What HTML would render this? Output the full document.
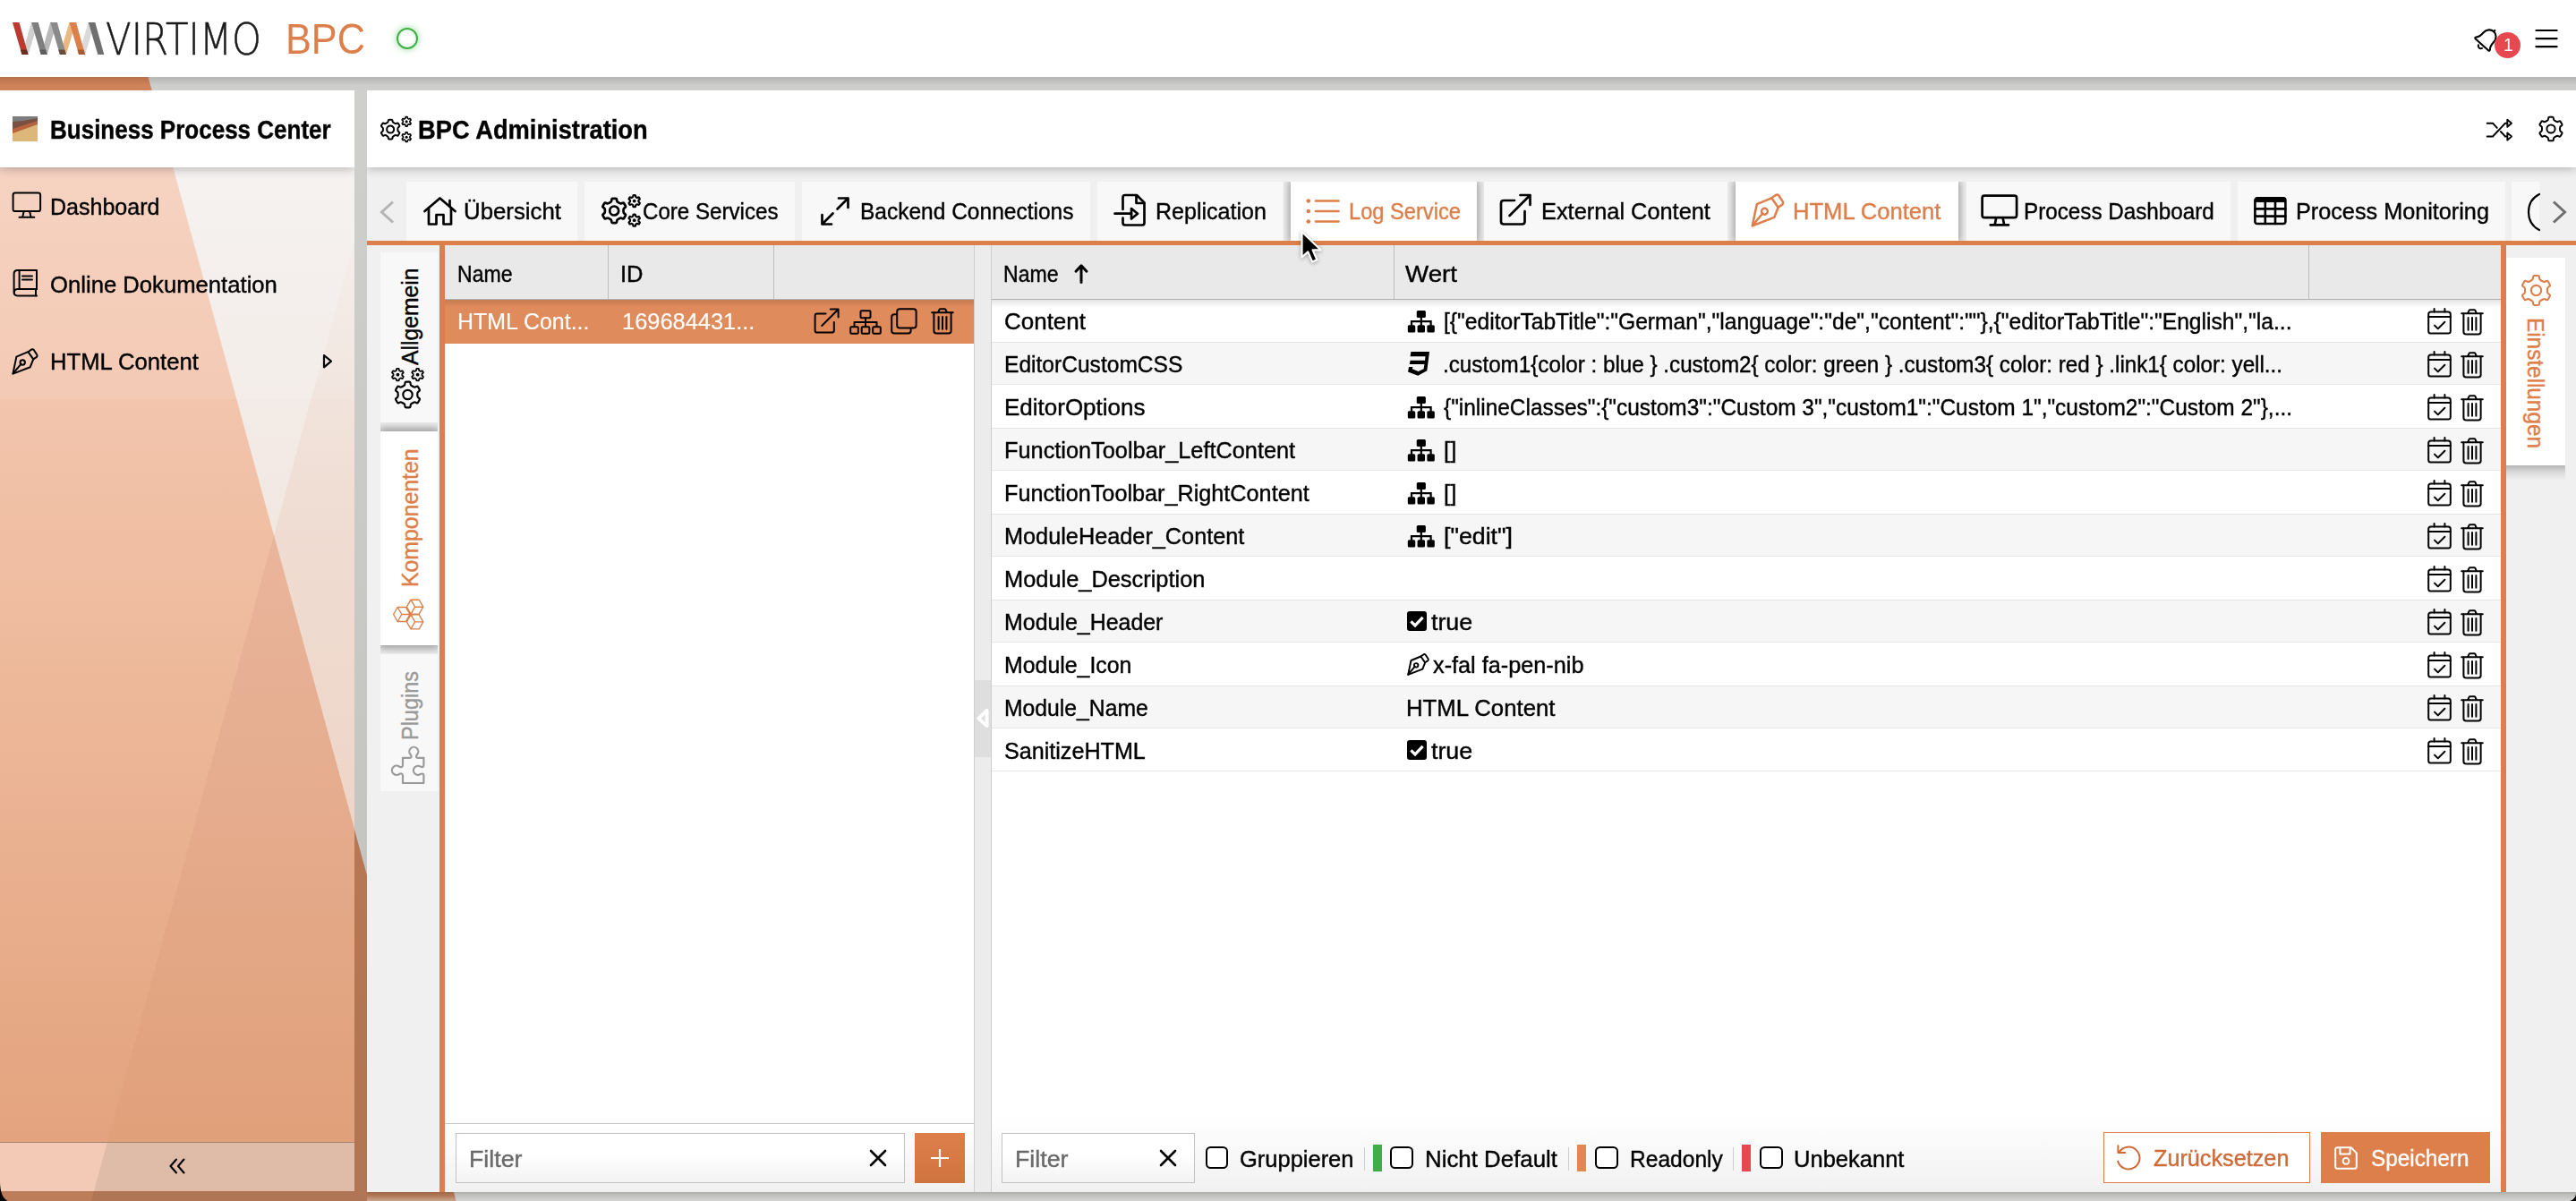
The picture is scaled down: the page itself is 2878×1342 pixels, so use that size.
<!DOCTYPE html>
<html lang="de"><head><meta charset="utf-8"><title>BPC Administration</title>
<style>
html,body{margin:0;padding:0}
body{width:2878px;height:1342px;position:relative;overflow:hidden;background:#cbcbc8;font-family:"Liberation Sans",sans-serif}
.b{position:absolute;box-sizing:border-box;display:block}
.t{position:absolute;white-space:nowrap;line-height:1;transform-origin:0 50%;display:block;-webkit-text-stroke:.4px currentColor}
svg{overflow:visible}
.i{fill:none;stroke-linecap:round;stroke-linejoin:round}
</style></head><body>
<svg class="b" style="left:0px;top:0px;" width="2878" height="1342" viewBox="0 0 2878 1342">
<defs>
<linearGradient id="go" x1="0" y1="0" x2="0" y2="1"><stop offset="0" stop-color="#d28459"/><stop offset="1" stop-color="#bc7d5a"/></linearGradient>
<linearGradient id="gg" x1="0" y1="0" x2="0" y2="1"><stop offset="0" stop-color="#d0d0ce"/><stop offset="1" stop-color="#c0c0bd"/></linearGradient>
</defs>
<rect x="0" y="0" width="2878" height="1342" fill="url(#gg)"/>
<polygon points="0,0 142.0,0 509.7,1342 0,1342" fill="url(#go)"/>
<polygon points="306,598 509.7,1342 101.9,1342" fill="#000" fill-opacity="0.06"/>
</svg>
<div class="b" style="left:0px;top:0px;width:2878px;height:86px;background:#fff"></div>
<div class="b" style="left:0px;top:86px;width:2878px;height:15px;background:linear-gradient(to bottom,rgba(0,0,0,.13),rgba(0,0,0,.01) 60%,rgba(0,0,0,0))"></div>
<svg class="b" style="left:0px;top:0px;clip-path:inset(187px 0 66px 0)" width="396" height="1342" viewBox="0 0 396 1342">
<defs>
<linearGradient id="sa" x1="0" y1="0" x2="0" y2="1"><stop offset="0" stop-color="#f5cebb"/><stop offset="0.45" stop-color="#efbc9f"/><stop offset="1" stop-color="#e3a37e"/></linearGradient>
<linearGradient id="sbb" x1="0" y1="0" x2="0" y2="1"><stop offset="0" stop-color="#e9b59c"/><stop offset="1" stop-color="#e0a07a"/></linearGradient>
<linearGradient id="st" x1="0" y1="0" x2="0" y2="1"><stop offset="0" stop-color="#e8bda6" stop-opacity="0.05"/><stop offset="0.5" stop-color="#e8bda6" stop-opacity="0.28"/><stop offset="1" stop-color="#e8bda6" stop-opacity="0.2"/></linearGradient>
<linearGradient id="sc" x1="0" y1="0" x2="0" y2="1"><stop offset="0" stop-color="#f4f1ef"/><stop offset="0.4" stop-color="#f2e7e1"/><stop offset="1" stop-color="#ecccba"/></linearGradient>
</defs>
<rect x="0" y="187" width="396" height="1089" fill="url(#sc)"/>
<polygon points="0,187 193.3,187 491.7,1276 0,1276" fill="url(#sa)"/>
<polygon points="306,598 491.7,1276 120.0,1276" fill="url(#sbb)"/>
<polygon points="396,269 306,598 396,927" fill="url(#st)"/>
</svg>
<div class="b" style="left:0px;top:101px;width:396px;height:86px;background:#fff;box-shadow:0 2px 10px rgba(0,0,0,.28);clip-path:inset(0 0 -20px 0)"></div>
<div class="b" style="left:0px;top:1276px;width:396px;height:55px;background:#dfbca8;border-top:1px solid #a58877"></div>
<svg class="b" style="left:0;top:1277px" width="130" height="54"><polygon points="0,0 119.7,0 104.9,54 0,54" fill="#f2cab5"/></svg>
<div class="b" style="left:410px;top:101px;width:2468px;height:1231px;background:#f0f0f0"></div>
<div class="b" style="left:410px;top:101px;width:2468px;height:86px;background:#fff;box-shadow:0 2px 10px rgba(0,0,0,.25);clip-path:inset(0 0 -20px 0)"></div>
<div class="b" style="left:410px;top:269px;width:2468px;height:5px;background:#dd7f4b"></div>
<div class="b" style="left:491px;top:274px;width:6px;height:1058px;background:#dd7f4b"></div>
<div class="b" style="left:2793.5px;top:274px;width:6px;height:1058px;background:#dd7f4b"></div>
<div class="b" style="left:497px;top:274px;width:591px;height:1058px;background:#fff"></div>
<div class="b" style="left:497px;top:274px;width:591px;height:61px;background:#e9e9e9;border-bottom:1px solid #b0b0b0"></div>
<div class="b" style="left:679px;top:274px;width:1px;height:60px;background:#bdbdbd"></div>
<div class="b" style="left:864px;top:274px;width:1px;height:60px;background:#bdbdbd"></div>
<div class="b" style="left:497px;top:335px;width:591px;height:49px;background:#e08b5c"></div>
<div class="b" style="left:497px;top:335px;width:591px;height:8px;background:linear-gradient(to bottom,rgba(0,0,0,.12),rgba(0,0,0,0))"></div>
<div class="b" style="left:497px;top:1255px;width:591px;height:77px;background:linear-gradient(to bottom,#fff,#f1f1f1);border-top:1px solid #c4c4c4"></div>
<div class="b" style="left:1088px;top:274px;width:20px;height:1058px;background:#ececec;border-left:1px solid #cfcfcf;border-right:1px solid #cfcfcf"></div>
<div class="b" style="left:1089px;top:760px;width:18px;height:86px;background:#dedede"></div>
<svg class="b" style="left:1089px;top:790px;" width="18" height="24" viewBox="0 0 18 24"><path d="M13.6 4 L4.2 12.6 L13.6 21.2Z" fill="none" stroke="#fff" stroke-width="3.8" stroke-linejoin="round"/></svg>
<div class="b" style="left:1108px;top:274px;width:1686px;height:1058px;background:#fff"></div>
<div class="b" style="left:1108px;top:274px;width:1686px;height:61px;background:#e9e9e9;border-bottom:1px solid #b0b0b0"></div>
<div class="b" style="left:1557px;top:274px;width:1px;height:60px;background:#bdbdbd"></div>
<div class="b" style="left:2579px;top:274px;width:1px;height:60px;background:#bdbdbd"></div>
<div class="b" style="left:1108px;top:382px;width:1686px;height:48px;background:#f6f6f6;border-top:1px solid #e6e6e6;border-bottom:1px solid #e6e6e6"></div>
<div class="b" style="left:1108px;top:478px;width:1686px;height:48px;background:#f6f6f6;border-top:1px solid #e6e6e6;border-bottom:1px solid #e6e6e6"></div>
<div class="b" style="left:1108px;top:574px;width:1686px;height:48px;background:#f6f6f6;border-top:1px solid #e6e6e6;border-bottom:1px solid #e6e6e6"></div>
<div class="b" style="left:1108px;top:670px;width:1686px;height:48px;background:#f6f6f6;border-top:1px solid #e6e6e6;border-bottom:1px solid #e6e6e6"></div>
<div class="b" style="left:1108px;top:766px;width:1686px;height:48px;background:#f6f6f6;border-top:1px solid #e6e6e6;border-bottom:1px solid #e6e6e6"></div>
<div class="b" style="left:1108px;top:861px;width:1686px;height:1px;background:#e6e6e6"></div>
<div class="b" style="left:1108px;top:335px;width:1686px;height:9px;background:linear-gradient(to bottom,rgba(0,0,0,.10),rgba(0,0,0,0))"></div>
<div class="b" style="left:1108px;top:1246px;width:1686px;height:86px;background:linear-gradient(to bottom,rgba(255,255,255,0),#f1f1f1)"></div>
<div class="b" style="left:410px;top:1332px;width:2468px;height:10px;background:linear-gradient(to bottom,rgba(0,0,0,.10),rgba(0,0,0,0) 35%,rgba(255,255,255,.35))"></div>
<svg class="b" style="left:0px;top:0px;" width="130" height="86" viewBox="0 0 130 86"><polygon points="24.5,61 31.5,61 42.5,25 35.0,25" fill="#cfcfcf"/><polygon points="45.7,61 52.7,61 63.7,25 56.2,25" fill="#b9b9b9"/><polygon points="66.9,61 73.9,61 84.9,25 77.4,25" fill="#e9b883"/><polygon points="88.1,61 95.1,61 106.1,25 98.6,25" fill="#dadada"/><polygon points="14.0,25 21.5,25 31.5,61 24.5,61" fill="#ba3a30"/><polygon points="35.2,25 42.7,25 52.7,61 45.7,61" fill="#7e7e7e"/><polygon points="56.4,25 63.9,25 73.9,61 66.9,61" fill="#8a8a8a"/><polygon points="77.6,25 85.1,25 95.1,61 88.1,61" fill="#dd7f4b"/><polygon points="98.8,25 106.3,25 116.3,61 109.3,61" fill="#6f6f6f"/><polygon points="22.9,55.5 29.9,55.5 31.5,61 24.5,61" fill="#6a2d22"/><polygon points="44.1,55.5 51.1,55.5 52.7,61 45.7,61" fill="#5e5e5e"/><polygon points="65.3,55.5 72.3,55.5 73.9,61 66.9,61" fill="#6b4a3c"/><polygon points="86.5,55.5 93.5,55.5 95.1,61 88.1,61" fill="#a85a30"/></svg>
<span class="t" style="left:117.5px;top:20.2px;font-size:49.4px;font-family:'DejaVu Sans',sans-serif;font-weight:200;color:#1b1b1b;-webkit-text-stroke:.55px #1b1b1b;transform:scaleX(0.8473)">VIRTIMO</span>
<span class="t" style="left:318.8px;top:19.1px;font-size:48.5px;color:#dd7f4b;transform:scaleX(0.8916);-webkit-text-stroke:0;">BPC</span>
<div class="b" style="left:443px;top:30.5px;width:24px;height:24px;border:2.3px solid #3bb044;border-radius:50%;box-shadow:0 0 7px 1px rgba(70,190,80,.45), inset 0 0 5px rgba(70,190,80,.25)"></div>
<svg class="b" style="left:0px;top:0px;" width="2878" height="86" viewBox="0 0 2878 86"><g transform="translate(2778.6,43.6) rotate(42)" class="i" stroke-width="2.1" stroke="#000">
<path d="M-9.6 8.5 Q-11.6 8.3 -10.4 6.6 C-8 4.4 -7.8 1.2 -7.8 -2.5 C-7.8 -8 -4 -11.2 0 -11.2 C4 -11.2 7.8 -8 7.8 -2.5 C7.8 1.2 8 4.4 10.4 6.6 Q11.6 8.3 9.6 8.5 Z"/>
<path d="M-2.7 11.4 A2.9 2.9 0 0 0 2.7 11.4"/><path d="M0 -11.2 V-13"/></g></svg>
<div class="b" style="left:2787px;top:36px;width:29.4px;height:29.4px;background:#e6484f;border-radius:50%"></div>
<span class="t" style="left:2796.7px;top:40.4px;font-size:20.5px;color:#fff;transform:scaleX(0.9500);-webkit-text-stroke:0;">1</span>
<svg class="b" style="left:2830px;top:30px;" width="30" height="28" viewBox="0 0 30 28"><path class="i" stroke-width="2.2" d="M3.5 4 H26.6 M3.5 13.1 H26.6 M3.5 22.2 H26.6"/ stroke="#000"></svg>
<svg class="b" style="left:14px;top:130px;" width="28" height="28" viewBox="0 0 28 28"><rect width="28" height="28" fill="#dcb779"/><polygon points="0,0 28,0 28,6 0,18" fill="#7a5040"/><polygon points="0,0 28,0 28,2 12,5 0,6" fill="#7d7d7d"/><polygon points="0,14 28,5 28,9 0,19" fill="#b8623f"/></svg>
<span class="t" style="left:56.3px;top:130.6px;font-size:28.8px;color:#000;transform:scaleX(0.9032);font-weight:bold;">Business Process Center</span>
<div class="b" style="left:0px;top:187px;width:396px;height:259px;background:rgba(255,255,255,.10)"></div>
<span class="t" style="left:56.2px;top:218.7px;font-size:25.2px;color:#000;transform:scaleX(0.9937);">Dashboard</span>
<span class="t" style="left:56.2px;top:305.7px;font-size:25.2px;color:#000;transform:scaleX(1.0187);">Online Dokumentation</span>
<span class="t" style="left:56.2px;top:391.7px;font-size:25.2px;color:#000;transform:scaleX(1.0189);">HTML Content</span>
<svg class="b" style="left:13px;top:214px;" width="34" height="31" viewBox="0 0 34 31"><g class="i" stroke-width="2" stroke="#000"><rect x="1.6" y="1.6" width="30.5" height="20.5" rx="2.4"/><path d="M13.6 22.5 L12.2 28.5 M20.2 22.5 L21.6 28.5 M8.5 28.8 H25.3"/></g></svg>
<svg class="b" style="left:14px;top:300px;" width="28" height="32" viewBox="0 0 28 32"><g class="i" stroke-width="2" stroke="#000"><path d="M27 23 V2 H5.6 Q1.6 2 1.6 6 V26.6 Q1.6 30.4 5.6 30.4 H27"/><path d="M7.6 2 V23"/><path d="M27 23 H5.4 Q1.8 23.2 1.8 26.8"/><path d="M26 23 V30.4"/><path d="M11 8.4 H22 M11 12.6 H22"/></g></svg>
<svg class="b" style="left:13px;top:388.5px;" width="30" height="30" viewBox="0 0 30 30"><g class="i" stroke-width="2" stroke="#000"><path d="M18.4 4.2 L22.4 1.4 Q23.6 .8 24.6 1.8 L28.4 7.6 Q29 8.8 28 9.8 L24.2 12.4"/><path d="M18.4 4.2 L24.2 12.4 L20.8 21.2 L1.4 28.6 L5.4 9.6 Z"/><path d="M1.6 28.4 L10.6 17.6"/><circle cx="12.2" cy="16" r="2.7"/></g></svg>
<svg class="b" style="left:360px;top:395px;" width="12" height="18" viewBox="0 0 12 18"><path class="i" stroke-width="2.2" d="M2 2 L10 8.6 L2 15.4 Z"/ stroke="#000"></svg>
<svg class="b" style="left:188px;top:1292px;" width="22" height="22" viewBox="0 0 22 22"><path class="i" stroke-width="2.1" d="M9 3.5 L2.5 11 L9 18.5 M17.5 3.5 L11 11 L17.5 18.5"/ stroke="#000"></svg>
<svg class="b" style="left:423.5px;top:128.5px" width="36.8" height="31.2" viewBox="0 0 46 39"><g fill="none" stroke="#000" stroke-linejoin="round" stroke-width="2.50"><path d="M12.36 6.85 Q12.49 5.87 13.48 5.87 L16.92 5.87 Q17.91 5.87 18.04 6.85 L18.25 8.41 Q18.38 9.39 19.24 9.88 L21.51 11.19 Q22.37 11.69 23.28 11.31 L24.74 10.71 Q25.65 10.34 26.15 11.20 L27.87 14.17 Q28.36 15.03 27.58 15.63 L26.33 16.60 Q25.55 17.20 25.55 18.19 L25.55 20.81 Q25.55 21.80 26.33 22.40 L27.58 23.37 Q28.36 23.97 27.87 24.83 L26.15 27.80 Q25.65 28.66 24.74 28.29 L23.28 27.69 Q22.37 27.31 21.51 27.81 L19.24 29.12 Q18.38 29.61 18.25 30.59 L18.04 32.15 Q17.91 33.13 16.92 33.13 L13.48 33.13 Q12.49 33.13 12.36 32.15 L12.15 30.59 Q12.02 29.61 11.16 29.12 L8.89 27.81 Q8.03 27.31 7.12 27.69 L5.66 28.29 Q4.75 28.66 4.25 27.80 L2.53 24.83 Q2.04 23.97 2.82 23.37 L4.07 22.40 Q4.85 21.80 4.85 20.81 L4.85 18.19 Q4.85 17.20 4.07 16.60 L2.82 15.63 Q2.04 15.03 2.53 14.17 L4.25 11.20 Q4.75 10.34 5.66 10.71 L7.12 11.31 Q8.03 11.69 8.89 11.19 L11.16 9.88 Q12.02 9.39 12.15 8.41 Z M10.20 19.50 a5.0 5.0 0 1 0 10.0 0 a5.0 5.0 0 1 0 -10.0 0Z"/><path d="M36.36 2.60 Q36.39 2.03 36.96 2.03 L38.44 2.03 Q39.01 2.03 39.04 2.60 L39.10 3.45 Q39.14 4.02 39.63 4.31 L40.45 4.78 Q40.94 5.06 41.46 4.81 L42.23 4.43 Q42.74 4.18 43.02 4.68 L43.76 5.95 Q44.04 6.44 43.57 6.76 L42.86 7.24 Q42.39 7.56 42.39 8.13 L42.39 9.07 Q42.39 9.64 42.86 9.96 L43.57 10.44 Q44.04 10.76 43.76 11.25 L43.02 12.52 Q42.74 13.02 42.23 12.77 L41.46 12.39 Q40.94 12.14 40.45 12.42 L39.63 12.89 Q39.14 13.18 39.10 13.75 L39.04 14.60 Q39.01 15.17 38.44 15.17 L36.96 15.17 Q36.39 15.17 36.36 14.60 L36.30 13.75 Q36.26 13.18 35.77 12.89 L34.95 12.42 Q34.46 12.14 33.94 12.39 L33.17 12.77 Q32.66 13.02 32.38 12.52 L31.64 11.25 Q31.36 10.76 31.83 10.44 L32.54 9.96 Q33.01 9.64 33.01 9.07 L33.01 8.13 Q33.01 7.56 32.54 7.24 L31.83 6.76 Q31.36 6.44 31.64 5.95 L32.38 4.68 Q32.66 4.18 33.17 4.43 L33.94 4.81 Q34.46 5.06 34.95 4.78 L35.77 4.31 Q36.26 4.02 36.30 3.45 Z" stroke-width="2.00"/><path d="M36.36 24.20 Q36.39 23.63 36.96 23.63 L38.44 23.63 Q39.01 23.63 39.04 24.20 L39.10 25.05 Q39.14 25.62 39.63 25.91 L40.45 26.38 Q40.94 26.66 41.46 26.41 L42.23 26.03 Q42.74 25.78 43.02 26.28 L43.76 27.55 Q44.04 28.04 43.57 28.36 L42.86 28.84 Q42.39 29.16 42.39 29.73 L42.39 30.67 Q42.39 31.24 42.86 31.56 L43.57 32.04 Q44.04 32.36 43.76 32.85 L43.02 34.12 Q42.74 34.62 42.23 34.37 L41.46 33.99 Q40.94 33.74 40.45 34.02 L39.63 34.49 Q39.14 34.78 39.10 35.35 L39.04 36.20 Q39.01 36.77 38.44 36.77 L36.96 36.77 Q36.39 36.77 36.36 36.20 L36.30 35.35 Q36.26 34.78 35.77 34.49 L34.95 34.02 Q34.46 33.74 33.94 33.99 L33.17 34.37 Q32.66 34.62 32.38 34.12 L31.64 32.85 Q31.36 32.36 31.83 32.04 L32.54 31.56 Q33.01 31.24 33.01 30.67 L33.01 29.73 Q33.01 29.16 32.54 28.84 L31.83 28.36 Q31.36 28.04 31.64 27.55 L32.38 26.28 Q32.66 25.78 33.17 26.03 L33.94 26.41 Q34.46 26.66 34.95 26.38 L35.77 25.91 Q36.26 25.62 36.30 25.05 Z" stroke-width="2.00"/></g><circle cx="37.7" cy="8.6" r="1.9" fill="#000"/><circle cx="37.7" cy="30.2" r="1.9" fill="#000"/></svg>
<span class="t" style="left:466.7px;top:130.6px;font-size:28.8px;color:#000;transform:scaleX(0.9475);font-weight:bold;">BPC Administration</span>
<svg class="b" style="left:2777px;top:131px;" width="32" height="28" viewBox="0 0 32 28"><g class="i" stroke-width="1.9" stroke="#000"><path d="M1.7 6.7 H8 L12.8 11.9"/><path d="M16.8 16 L22 21.5 H23.2"/><path d="M1.7 21.5 H8 L22 6.7 H23.2"/><path d="M24.3 2.6 L29 6.7 L24.3 10.8 Z"/><path d="M24.3 17.4 L29 21.5 L24.3 25.6 Z"/></g></svg>
<svg class="b" style="left:2835.4px;top:129px" width="30" height="30" viewBox="0 0 30 30"><path d="M12.23 2.64 Q12.35 1.66 13.34 1.66 L16.66 1.66 Q17.65 1.66 17.77 2.64 L17.97 4.19 Q18.09 5.18 18.95 5.67 L21.10 6.91 Q21.96 7.41 22.87 7.03 L24.32 6.42 Q25.23 6.04 25.72 6.89 L27.38 9.77 Q27.88 10.62 27.09 11.22 L25.84 12.17 Q25.05 12.77 25.05 13.76 L25.05 16.24 Q25.05 17.23 25.84 17.83 L27.09 18.78 Q27.88 19.38 27.38 20.23 L25.72 23.11 Q25.23 23.96 24.32 23.58 L22.87 22.97 Q21.96 22.59 21.10 23.09 L18.95 24.33 Q18.09 24.82 17.97 25.81 L17.77 27.36 Q17.65 28.34 16.66 28.34 L13.34 28.34 Q12.35 28.34 12.23 27.36 L12.03 25.81 Q11.91 24.82 11.05 24.33 L8.90 23.09 Q8.04 22.59 7.13 22.97 L5.68 23.58 Q4.77 23.96 4.28 23.11 L2.62 20.23 Q2.12 19.38 2.91 18.78 L4.16 17.83 Q4.95 17.23 4.95 16.24 L4.95 13.76 Q4.95 12.77 4.16 12.17 L2.91 11.22 Q2.12 10.62 2.62 9.77 L4.28 6.89 Q4.77 6.04 5.68 6.42 L7.13 7.03 Q8.04 7.41 8.90 6.91 L11.05 5.67 Q11.91 5.18 12.03 4.19 Z M10.40 15.00 a4.6 4.6 0 1 0 9.2 0 a4.6 4.6 0 1 0 -9.2 0Z" fill="none" stroke="#000" stroke-linejoin="round" stroke-width="2.00"/></svg>
<div class="b" style="left:454px;top:203px;width:191px;height:66px;background:#f8f8f8"></div>
<span class="t" style="left:517.9px;top:224.0px;font-size:25.2px;color:#000;transform:scaleX(1.0242);">Übersicht</span>
<div class="b" style="left:653px;top:203px;width:235px;height:66px;background:#f8f8f8"></div>
<span class="t" style="left:717.7px;top:224.0px;font-size:25.2px;color:#000;transform:scaleX(0.9574);">Core Services</span>
<div class="b" style="left:896px;top:203px;width:322px;height:66px;background:#f8f8f8"></div>
<span class="t" style="left:961.2px;top:224.0px;font-size:25.2px;color:#000;transform:scaleX(0.9729);">Backend Connections</span>
<div class="b" style="left:1226px;top:203px;width:208px;height:66px;background:#f8f8f8"></div>
<span class="t" style="left:1290.9px;top:224.0px;font-size:25.2px;color:#000;transform:scaleX(0.9939);">Replication</span>
<div class="b" style="left:1442px;top:203px;width:208px;height:66px;background:#fff;box-shadow:0 0 9px 2px rgba(0,0,0,.36);clip-path:inset(0 -9px 0 -9px)"></div>
<span class="t" style="left:1506.5px;top:224.0px;font-size:25.2px;color:#dd7f4b;transform:scaleX(0.9394);">Log Service</span>
<div class="b" style="left:1658px;top:203px;width:272px;height:66px;background:#f8f8f8"></div>
<span class="t" style="left:1722.4px;top:224.0px;font-size:25.2px;color:#000;transform:scaleX(1.0069);">External Content</span>
<div class="b" style="left:1939px;top:203px;width:249px;height:66px;background:#fff;box-shadow:0 0 9px 2px rgba(0,0,0,.36);clip-path:inset(0 -9px 0 -9px)"></div>
<span class="t" style="left:2003.3px;top:224.0px;font-size:25.2px;color:#dd7f4b;transform:scaleX(1.0158);">HTML Content</span>
<div class="b" style="left:2197px;top:203px;width:295px;height:66px;background:#f8f8f8"></div>
<span class="t" style="left:2260.5px;top:224.0px;font-size:25.2px;color:#000;transform:scaleX(0.9620);">Process Dashboard</span>
<div class="b" style="left:2500px;top:203px;width:299px;height:66px;background:#f8f8f8"></div>
<span class="t" style="left:2564.9px;top:224.0px;font-size:25.2px;color:#000;transform:scaleX(1.0015);">Process Monitoring</span>
<div class="b" style="left:2806px;top:203px;width:31px;height:66px;background:#f8f8f8"></div>
<div class="b" style="left:2837px;top:203px;width:41px;height:66px;background:#f0f0f0"></div>
<svg class="b" style="left:2822px;top:214px;clip-path:inset(0 0 0 0)" width="16" height="46" viewBox="0 0 16 46"><path class="i" stroke-width="2.2" d="M15 3 C5 8 3 16 3 23 C3 30 5 38 15 43"/ stroke="#000"></svg>
<svg class="b" style="left:2850px;top:222.5px;" width="20" height="28" viewBox="0 0 20 28"><path d="M3 2.5 L15.5 14 L3 25.5" fill="none" stroke="#6f6f6f" stroke-width="3"/></svg>
<svg class="b" style="left:422.5px;top:222.5px;" width="20" height="28" viewBox="0 0 20 28"><path d="M16 2.5 L3.5 14 L16 25.5" fill="none" stroke="#b4b4b4" stroke-width="3"/></svg>
<svg class="b" style="left:473px;top:219px;" width="38" height="34" viewBox="0 0 38 34"><g class="i" stroke-width="2.7" stroke="#000"><path d="M1.5 17 L18.5 2.5 L35.5 17"/><path d="M6 13.5 V31.5 H14.5 V21 H22.5 V31.5 H31 V13.5"/><path d="M29.5 5 V11.5"/></g></svg>
<svg class="b" style="left:671px;top:216px" width="46.0" height="39.0" viewBox="0 0 46 39"><g fill="none" stroke="#000" stroke-linejoin="round" stroke-width="2.70"><path d="M12.36 6.85 Q12.49 5.87 13.48 5.87 L16.92 5.87 Q17.91 5.87 18.04 6.85 L18.25 8.41 Q18.38 9.39 19.24 9.88 L21.51 11.19 Q22.37 11.69 23.28 11.31 L24.74 10.71 Q25.65 10.34 26.15 11.20 L27.87 14.17 Q28.36 15.03 27.58 15.63 L26.33 16.60 Q25.55 17.20 25.55 18.19 L25.55 20.81 Q25.55 21.80 26.33 22.40 L27.58 23.37 Q28.36 23.97 27.87 24.83 L26.15 27.80 Q25.65 28.66 24.74 28.29 L23.28 27.69 Q22.37 27.31 21.51 27.81 L19.24 29.12 Q18.38 29.61 18.25 30.59 L18.04 32.15 Q17.91 33.13 16.92 33.13 L13.48 33.13 Q12.49 33.13 12.36 32.15 L12.15 30.59 Q12.02 29.61 11.16 29.12 L8.89 27.81 Q8.03 27.31 7.12 27.69 L5.66 28.29 Q4.75 28.66 4.25 27.80 L2.53 24.83 Q2.04 23.97 2.82 23.37 L4.07 22.40 Q4.85 21.80 4.85 20.81 L4.85 18.19 Q4.85 17.20 4.07 16.60 L2.82 15.63 Q2.04 15.03 2.53 14.17 L4.25 11.20 Q4.75 10.34 5.66 10.71 L7.12 11.31 Q8.03 11.69 8.89 11.19 L11.16 9.88 Q12.02 9.39 12.15 8.41 Z M10.20 19.50 a5.0 5.0 0 1 0 10.0 0 a5.0 5.0 0 1 0 -10.0 0Z"/><path d="M36.36 2.60 Q36.39 2.03 36.96 2.03 L38.44 2.03 Q39.01 2.03 39.04 2.60 L39.10 3.45 Q39.14 4.02 39.63 4.31 L40.45 4.78 Q40.94 5.06 41.46 4.81 L42.23 4.43 Q42.74 4.18 43.02 4.68 L43.76 5.95 Q44.04 6.44 43.57 6.76 L42.86 7.24 Q42.39 7.56 42.39 8.13 L42.39 9.07 Q42.39 9.64 42.86 9.96 L43.57 10.44 Q44.04 10.76 43.76 11.25 L43.02 12.52 Q42.74 13.02 42.23 12.77 L41.46 12.39 Q40.94 12.14 40.45 12.42 L39.63 12.89 Q39.14 13.18 39.10 13.75 L39.04 14.60 Q39.01 15.17 38.44 15.17 L36.96 15.17 Q36.39 15.17 36.36 14.60 L36.30 13.75 Q36.26 13.18 35.77 12.89 L34.95 12.42 Q34.46 12.14 33.94 12.39 L33.17 12.77 Q32.66 13.02 32.38 12.52 L31.64 11.25 Q31.36 10.76 31.83 10.44 L32.54 9.96 Q33.01 9.64 33.01 9.07 L33.01 8.13 Q33.01 7.56 32.54 7.24 L31.83 6.76 Q31.36 6.44 31.64 5.95 L32.38 4.68 Q32.66 4.18 33.17 4.43 L33.94 4.81 Q34.46 5.06 34.95 4.78 L35.77 4.31 Q36.26 4.02 36.30 3.45 Z" stroke-width="2.16"/><path d="M36.36 24.20 Q36.39 23.63 36.96 23.63 L38.44 23.63 Q39.01 23.63 39.04 24.20 L39.10 25.05 Q39.14 25.62 39.63 25.91 L40.45 26.38 Q40.94 26.66 41.46 26.41 L42.23 26.03 Q42.74 25.78 43.02 26.28 L43.76 27.55 Q44.04 28.04 43.57 28.36 L42.86 28.84 Q42.39 29.16 42.39 29.73 L42.39 30.67 Q42.39 31.24 42.86 31.56 L43.57 32.04 Q44.04 32.36 43.76 32.85 L43.02 34.12 Q42.74 34.62 42.23 34.37 L41.46 33.99 Q40.94 33.74 40.45 34.02 L39.63 34.49 Q39.14 34.78 39.10 35.35 L39.04 36.20 Q39.01 36.77 38.44 36.77 L36.96 36.77 Q36.39 36.77 36.36 36.20 L36.30 35.35 Q36.26 34.78 35.77 34.49 L34.95 34.02 Q34.46 33.74 33.94 33.99 L33.17 34.37 Q32.66 34.62 32.38 34.12 L31.64 32.85 Q31.36 32.36 31.83 32.04 L32.54 31.56 Q33.01 31.24 33.01 30.67 L33.01 29.73 Q33.01 29.16 32.54 28.84 L31.83 28.36 Q31.36 28.04 31.64 27.55 L32.38 26.28 Q32.66 25.78 33.17 26.03 L33.94 26.41 Q34.46 26.66 34.95 26.38 L35.77 25.91 Q36.26 25.62 36.30 25.05 Z" stroke-width="2.16"/></g><circle cx="37.7" cy="8.6" r="1.9" fill="#000"/><circle cx="37.7" cy="30.2" r="1.9" fill="#000"/></svg>
<svg class="b" style="left:916px;top:219px;" width="34" height="34" viewBox="0 0 34 34"><g class="i" stroke-width="2.7" stroke="#000"><path d="M3 31 L14.5 19.5 M19.5 14.5 L31 3"/><path d="M21 2.5 H31.5 V13"/><path d="M2.5 21 V31.5 H13"/></g></svg>
<svg class="b" style="left:1244px;top:216px;" width="37" height="38" viewBox="0 0 37 38"><g class="i" stroke-width="2.7" stroke="#000"><path d="M10.5 18 V4.5 Q10.5 2 13 2 H26 L34.5 10.5 V33 Q34.5 35.5 32 35.5 H13 Q10.5 35.5 10.5 33 V27.5"/><path d="M25.5 2.5 V11 H34"/><path d="M1.5 22.7 H20"/><path d="M20 17 L27 22.7 L20 28.5 Z"/></g></svg>
<svg class="b" style="left:1459px;top:221px;" width="38" height="30" viewBox="0 0 38 30"><g fill="none" stroke="#dd7f4b" stroke-width="2.7" stroke-linecap="round"><path d="M11 3.5 H36.5 M11 15 H36.5 M11 26.5 H36.5"/></g><g fill="#dd7f4b"><circle cx="2.8" cy="3.5" r="2.3"/><circle cx="2.8" cy="15" r="2.3"/><circle cx="2.8" cy="26.5" r="2.3"/></g></svg>
<svg class="b" style="left:1675px;top:216px;" width="37.0" height="37.0" viewBox="0 0 37 37"><g class="i" stroke="#000" stroke-width="2.70"><path d="M28.5 20 V31.5 Q28.5 34.5 25.5 34.5 H5 Q2 34.5 2 31.5 V11 Q2 8 5 8 H17"/><path d="M11.5 25 L34 2.5"/><path d="M23.5 2 H34.5 V13"/></g></svg>
<svg class="b" style="left:1955.5px;top:216px;" width="38" height="38" viewBox="0 0 30 30"><g class="i" stroke-width="2.0" stroke="#dd7f4b"><path d="M18.4 4.2 L22.4 1.4 Q23.6 .8 24.6 1.8 L28.4 7.6 Q29 8.8 28 9.8 L24.2 12.4"/><path d="M18.4 4.2 L24.2 12.4 L20.8 21.2 L1.4 28.6 L5.4 9.6 Z"/><path d="M1.6 28.4 L10.6 17.6"/><circle cx="12.2" cy="16" r="2.7"/></g></svg>
<svg class="b" style="left:2213px;top:217px;" width="42" height="38" viewBox="0 0 42 38"><g class="i" stroke-width="2.7" stroke="#000"><rect x="1.6" y="1.6" width="38.5" height="24.6" rx="2.6"/><path d="M17.2 26.6 L15.8 33.6 M24.6 26.6 L26 33.6 M10.8 34.4 H31"/></g></svg>
<svg class="b" style="left:2518px;top:219.5px;" width="37" height="33" viewBox="0 0 37 33"><g class="i" stroke-width="2.6" stroke-linecap="butt" stroke="#000"><rect x="1.4" y="1.4" width="34" height="28.6" rx="2.4"/><path d="M1.4 13.4 H35.4 M1.4 21.6 H35.4 M12.8 5 V30 M24 5 V30"/></g><path d="M1.4 5.6 V3.8 Q1.4 1.4 3.8 1.4 H33 Q35.4 1.4 35.4 3.8 V5.6 Z" fill="#000" stroke="#000" stroke-width="1"/></svg>
<svg class="b" style="left:1451.5px;top:256.5px;z-index:50;filter:drop-shadow(0 1px 2px rgba(0,0,0,.35))" width="36" height="44" viewBox="0 0 36 44"><path d="M2.5 2 L2.5 30.5 L9.3 24.4 L14.2 35.6 L19.4 33.3 L14.6 22.3 L23.6 22.3 Z" fill="#000" stroke="#fff" stroke-width="2.2" stroke-linejoin="round"/></svg>
<div class="b" style="left:425px;top:281.5px;width:64px;height:190.5px;background:#f8f8f8"></div>
<div class="b" style="left:425px;top:731px;width:64px;height:153px;background:#f8f8f8"></div>
<div class="b" style="left:425px;top:481.5px;width:64px;height:239.5px;background:#fff;box-shadow:0 0 10px 3px rgba(0,0,0,.40);clip-path:inset(-9.5px 0 -9.5px 0)"></div>
<span class="t" style="left:458.5px;top:407.5px;font-size:25.2px;color:#000;transform-origin:0 0;transform:rotate(-90deg) scaleX(0.9805) translateY(-50%);">Allgemein</span>
<span class="t" style="left:458.5px;top:655.6px;font-size:25.2px;color:#dd7f4b;transform-origin:0 0;transform:rotate(-90deg) scaleX(0.9852) translateY(-50%);">Komponenten</span>
<span class="t" style="left:458.5px;top:827.0px;font-size:25.2px;color:#9a9a9a;transform-origin:0 0;transform:rotate(-90deg) scaleX(0.9316) translateY(-50%);">Plugins</span>
<svg class="b" style="left:436px;top:409px;" width="40" height="50" viewBox="0 0 40 50"><g fill="none" stroke="#000" stroke-linejoin="round" stroke-width="2.2"><path d="M16.52 18.72 Q16.66 17.68 17.71 17.68 L21.29 17.68 Q22.34 17.68 22.48 18.72 L22.70 20.37 Q22.83 21.41 23.74 21.94 L26.09 23.29 Q27.00 23.82 27.97 23.42 L29.51 22.78 Q30.48 22.38 31.00 23.29 L32.80 26.39 Q33.32 27.30 32.49 27.94 L31.17 28.95 Q30.34 29.59 30.34 30.64 L30.34 33.36 Q30.34 34.41 31.17 35.05 L32.49 36.06 Q33.32 36.70 32.80 37.61 L31.00 40.71 Q30.48 41.62 29.51 41.22 L27.97 40.58 Q27.00 40.18 26.09 40.71 L23.74 42.06 Q22.83 42.59 22.70 43.63 L22.48 45.28 Q22.34 46.32 21.29 46.32 L17.71 46.32 Q16.66 46.32 16.52 45.28 L16.30 43.63 Q16.17 42.59 15.26 42.06 L12.91 40.71 Q12.00 40.18 11.03 40.58 L9.49 41.22 Q8.52 41.62 8.00 40.71 L6.20 37.61 Q5.68 36.70 6.51 36.06 L7.83 35.05 Q8.66 34.41 8.66 33.36 L8.66 30.64 Q8.66 29.59 7.83 28.95 L6.51 27.94 Q5.68 27.30 6.20 26.39 L8.00 23.29 Q8.52 22.38 9.49 22.78 L11.03 23.42 Q12.00 23.82 12.91 23.29 L15.26 21.94 Q16.17 21.41 16.30 20.37 Z M14.30 32.00 a5.2 5.2 0 1 0 10.4 0 a5.2 5.2 0 1 0 -10.4 0Z"/><path d="M7.01 3.50 Q7.06 2.93 7.63 2.93 L9.17 2.93 Q9.74 2.93 9.79 3.50 L9.86 4.36 Q9.90 4.93 10.39 5.22 L11.29 5.73 Q11.78 6.02 12.29 5.77 L13.07 5.40 Q13.59 5.15 13.87 5.65 L14.65 6.99 Q14.93 7.48 14.46 7.80 L13.75 8.29 Q13.28 8.62 13.28 9.19 L13.28 10.21 Q13.28 10.78 13.75 11.11 L14.46 11.60 Q14.93 11.92 14.65 12.41 L13.87 13.75 Q13.59 14.25 13.07 14.00 L12.29 13.63 Q11.78 13.38 11.29 13.67 L10.39 14.18 Q9.90 14.47 9.86 15.04 L9.79 15.90 Q9.74 16.47 9.17 16.47 L7.63 16.47 Q7.06 16.47 7.01 15.90 L6.94 15.04 Q6.90 14.47 6.41 14.18 L5.51 13.67 Q5.02 13.38 4.51 13.63 L3.73 14.00 Q3.21 14.25 2.93 13.75 L2.15 12.41 Q1.87 11.92 2.34 11.60 L3.05 11.11 Q3.52 10.78 3.52 10.21 L3.52 9.19 Q3.52 8.62 3.05 8.29 L2.34 7.80 Q1.87 7.48 2.15 6.99 L2.93 5.65 Q3.21 5.15 3.73 5.40 L4.51 5.77 Q5.02 6.02 5.51 5.73 L6.41 5.22 Q6.90 4.93 6.94 4.36 Z" stroke-width="1.8"/><path d="M29.21 3.50 Q29.26 2.93 29.83 2.93 L31.37 2.93 Q31.94 2.93 31.99 3.50 L32.06 4.36 Q32.10 4.93 32.59 5.22 L33.49 5.73 Q33.98 6.02 34.49 5.77 L35.27 5.40 Q35.79 5.15 36.07 5.65 L36.85 6.99 Q37.13 7.48 36.66 7.80 L35.95 8.29 Q35.48 8.62 35.48 9.19 L35.48 10.21 Q35.48 10.78 35.95 11.11 L36.66 11.60 Q37.13 11.92 36.85 12.41 L36.07 13.75 Q35.79 14.25 35.27 14.00 L34.49 13.63 Q33.98 13.38 33.49 13.67 L32.59 14.18 Q32.10 14.47 32.06 15.04 L31.99 15.90 Q31.94 16.47 31.37 16.47 L29.83 16.47 Q29.26 16.47 29.21 15.90 L29.14 15.04 Q29.10 14.47 28.61 14.18 L27.71 13.67 Q27.22 13.38 26.71 13.63 L25.93 14.00 Q25.41 14.25 25.13 13.75 L24.35 12.41 Q24.07 11.92 24.54 11.60 L25.25 11.11 Q25.72 10.78 25.72 10.21 L25.72 9.19 Q25.72 8.62 25.25 8.29 L24.54 7.80 Q24.07 7.48 24.35 6.99 L25.13 5.65 Q25.41 5.15 25.93 5.40 L26.71 5.77 Q27.22 6.02 27.71 5.73 L28.61 5.22 Q29.10 4.93 29.14 4.36 Z" stroke-width="1.8"/></g><circle cx="8.4" cy="9.7" r="1.9"/><circle cx="30.6" cy="9.7" r="1.9"/></svg>
<svg class="b" style="left:439px;top:667px;" width="38" height="38" viewBox="0 0 38 38"><g transform="translate(19,19.5) rotate(-90)"><path d="M0.0 -18.4 L8.0 -13.8 V-4.6 L0.0 0.0 L-8.0 -4.6 V-13.8 Z M-8.0 -13.8 L0.0 -9.2 L8.0 -13.8 M0.0 -9.2 V0.0 M-8.3 -3.6 L-0.3 1.0 V10.2 L-8.3 14.8 L-16.3 10.2 V1.0 Z M-16.3 1.0 L-8.3 5.6 L-0.3 1.0 M-8.3 5.6 V14.8 M8.3 -3.6 L16.3 1.0 V10.2 L8.3 14.8 L0.3 10.2 V1.0 Z M0.3 1.0 L8.3 5.6 L16.3 1.0 M8.3 5.6 V14.8" fill="none" stroke="#dd7f4b" stroke-width="1.35" stroke-linejoin="round"/></g></svg>
<svg class="b" style="left:436px;top:833px;" width="44" height="44" viewBox="0 0 44 44"><path d="M14 13.8 H21.6 C24.4 13.8 23.6 11.6 22.7 10.2 A5 5 0 1 1 29.9 10.2 C29 11.6 28.2 13.8 31 13.8 H37.4 V21.8 C37.4 24.8 35.2 24.2 33.8 23.6 A5.05 5.05 0 1 0 33.8 32 C35.2 31.4 37.4 30.8 37.4 33.8 V42 H14 V33.8 C14 30.8 11.8 31.2 10.4 31.8 A5.2 5.2 0 1 1 10.4 23.8 C11.8 24.4 14 24.8 14 21.8 Z" fill="none" stroke="#9a9a9a" stroke-width="2.2" stroke-linejoin="round"/></svg>
<div class="b" style="left:2800px;top:520px;width:66px;height:17px;background:linear-gradient(to bottom,rgba(0,0,0,.24),rgba(0,0,0,.08) 50%,rgba(0,0,0,0))"></div>
<div class="b" style="left:2800px;top:288px;width:66px;height:232px;background:#fff"></div>
<svg class="b" style="left:2815px;top:305.5px" width="37" height="37" viewBox="0 0 30 30"><path d="M12.23 2.64 Q12.35 1.66 13.34 1.66 L16.66 1.66 Q17.65 1.66 17.77 2.64 L17.97 4.19 Q18.09 5.18 18.95 5.67 L21.10 6.91 Q21.96 7.41 22.87 7.03 L24.32 6.42 Q25.23 6.04 25.72 6.89 L27.38 9.77 Q27.88 10.62 27.09 11.22 L25.84 12.17 Q25.05 12.77 25.05 13.76 L25.05 16.24 Q25.05 17.23 25.84 17.83 L27.09 18.78 Q27.88 19.38 27.38 20.23 L25.72 23.11 Q25.23 23.96 24.32 23.58 L22.87 22.97 Q21.96 22.59 21.10 23.09 L18.95 24.33 Q18.09 24.82 17.97 25.81 L17.77 27.36 Q17.65 28.34 16.66 28.34 L13.34 28.34 Q12.35 28.34 12.23 27.36 L12.03 25.81 Q11.91 24.82 11.05 24.33 L8.90 23.09 Q8.04 22.59 7.13 22.97 L5.68 23.58 Q4.77 23.96 4.28 23.11 L2.62 20.23 Q2.12 19.38 2.91 18.78 L4.16 17.83 Q4.95 17.23 4.95 16.24 L4.95 13.76 Q4.95 12.77 4.16 12.17 L2.91 11.22 Q2.12 10.62 2.62 9.77 L4.28 6.89 Q4.77 6.04 5.68 6.42 L7.13 7.03 Q8.04 7.41 8.90 6.91 L11.05 5.67 Q11.91 5.18 12.03 4.19 Z M10.40 15.00 a4.6 4.6 0 1 0 9.2 0 a4.6 4.6 0 1 0 -9.2 0Z" fill="none" stroke="#dd7f4b" stroke-linejoin="round" stroke-width="1.70"/></svg>
<span class="t" style="left:2831.5px;top:355.0px;font-size:25.2px;color:#dd7f4b;transform-origin:0 0;transform:rotate(90deg) scaleX(0.9649) translateY(-50%);">Einstellungen</span>
<span class="t" style="left:510.6px;top:293.7px;font-size:25.2px;color:#000;transform:scaleX(0.9151);">Name</span>
<span class="t" style="left:692.9px;top:293.7px;font-size:25.2px;color:#000;transform:scaleX(1.0123);">ID</span>
<span class="t" style="left:511.4px;top:347.2px;font-size:25.2px;color:#fff;transform:scaleX(0.9906);-webkit-text-stroke:.15px #fff;">HTML Cont...</span>
<span class="t" style="left:694.9px;top:347.2px;font-size:25.2px;color:#fff;transform:scaleX(1.0093);-webkit-text-stroke:.15px #fff;">169684431...</span>
<svg class="b" style="left:908.5px;top:344px;" width="29.6" height="29.6" viewBox="0 0 37 37"><g class="i" stroke="#000" stroke-width="2.50"><path d="M28.5 20 V31.5 Q28.5 34.5 25.5 34.5 H5 Q2 34.5 2 31.5 V11 Q2 8 5 8 H17"/><path d="M11.5 25 L34 2.5"/><path d="M23.5 2 H34.5 V13"/></g></svg>
<svg class="b" style="left:949px;top:345.5px;" width="36.0" height="28.0" viewBox="0 0 36 28"><g class="i" stroke-width="2.00" stroke-linejoin="miter" stroke="#000"><rect x="12.5" y="1.2" width="11" height="8" rx="1"/><rect x="1.2" y="19.2" width="8.6" height="7.6" rx="1"/><rect x="13.7" y="19.2" width="8.6" height="7.6" rx="1"/><rect x="26.2" y="19.2" width="8.6" height="7.6" rx="1"/><path d="M18 9.5 V19 M5.5 19 V14 H30.5 V19"/></g></svg>
<svg class="b" style="left:995px;top:343.5px;" width="30" height="30" viewBox="0 0 30 30"><g class="i" stroke-width="2" stroke="#000"><rect x="7.2" y="1.2" width="21.4" height="21.4" rx="3"/><path d="M22.6 22.8 V25.6 Q22.6 28.6 19.6 28.6 H4.2 Q1.2 28.6 1.2 25.6 V10.2 Q1.2 7.2 4.2 7.2 H7"/></g></svg>
<svg class="b" style="left:1040px;top:344px;" width="26" height="30" viewBox="0 0 26 30"><g class="i" stroke-width="2.0" stroke="#000"><path d="M1.2 5.2 H24.8"/><path d="M8.2 5 L9.6 1.8 Q10 1.2 10.8 1.2 H15.2 Q16 1.2 16.4 1.8 L17.8 5"/><path d="M3.4 5.4 V25.8 Q3.4 28.6 6.2 28.6 H19.8 Q22.6 28.6 22.6 25.8 V5.4"/><path d="M8.6 10 V23.8 M13 10 V23.8 M17.4 10 V23.8"/></g></svg>
<div class="b" style="left:509px;top:1266px;width:502px;height:56px;background:linear-gradient(to bottom,#fff 40%,#f3f3f3);border:1px solid #c2c2c2"></div>
<span class="t" style="left:523.6px;top:1282.7px;font-size:25.2px;color:#6a6a6a;transform:scaleX(1.0627);">Filter</span>
<svg class="b" style="left:971px;top:1283.5px;" width="20" height="20" viewBox="0 0 20 20"><path class="i" stroke-width="2.6" stroke-linecap="butt" d="M2 2 L18 18 M18 2 L2 18"/ stroke="#000"></svg>
<div class="b" style="left:1022px;top:1266px;width:56px;height:56px;background:linear-gradient(to bottom,#dd7f4b,#cf733f)"></div>
<svg class="b" style="left:1039px;top:1283px;" width="22" height="22" viewBox="0 0 22 22"><path d="M11 1 V21 M1 11 H21" fill="none" stroke="#fff" stroke-width="2.2"/></svg>
<span class="t" style="left:1121.4px;top:293.7px;font-size:25.2px;color:#000;transform:scaleX(0.9151);">Name</span>
<svg class="b" style="left:1201px;top:294px;" width="14" height="24" viewBox="0 0 14 24"><path class="i" stroke-width="3" stroke-linecap="butt" stroke-linejoin="miter" d="M7 21.5 V3.5 M1 9.2 L7 2.8 L13 9.2"/ stroke="#000"></svg>
<span class="t" style="left:1569.9px;top:293.7px;font-size:25.2px;color:#000;transform:scaleX(1.1000);">Wert</span>
<span class="t" style="left:1121.9px;top:346.7px;font-size:25.2px;color:#000;transform:scaleX(1.0311);">Content</span>
<svg class="b" style="left:1572px;top:347px;" width="31.6" height="24.4" viewBox="0 0 32 26"><g fill="#000"><rect x="10.6" y="0" width="10.8" height="8.6" rx="1.6"/><rect x="0" y="17.4" width="9" height="8.6" rx="1.6"/><rect x="11.5" y="17.4" width="9" height="8.6" rx="1.6"/><rect x="23" y="17.4" width="9" height="8.6" rx="1.6"/></g><path d="M16 8 V18 M4.5 18 V13 H27.5 V18" fill="none" stroke="#000" stroke-width="2.4"/></svg>
<span class="t" style="left:1612.9px;top:346.7px;font-size:25.2px;color:#000;transform:scaleX(0.9776);">[{"editorTabTitle":"German","language":"de","content":""},{"editorTabTitle":"English","la...</span>
<svg class="b" style="left:2712px;top:343.5px;" width="27" height="30" viewBox="0 0 27 30"><g class="i" stroke-width="2" stroke="#000"><rect x="1.2" y="4.6" width="24.6" height="24" rx="2.6"/><path d="M1.2 10 H25.8"/><path d="M7.6 1 V4.6 M19.4 1 V4.6"/><path d="M8 19.6 L11.8 23.4 L19.4 15.8"/></g></svg>
<svg class="b" style="left:2749px;top:344.5px;" width="26" height="30" viewBox="0 0 26 30"><g class="i" stroke-width="2.0" stroke="#000"><path d="M1.2 5.2 H24.8"/><path d="M8.2 5 L9.6 1.8 Q10 1.2 10.8 1.2 H15.2 Q16 1.2 16.4 1.8 L17.8 5"/><path d="M3.4 5.4 V25.8 Q3.4 28.6 6.2 28.6 H19.8 Q22.6 28.6 22.6 25.8 V5.4"/><path d="M8.6 10 V23.8 M13 10 V23.8 M17.4 10 V23.8"/></g></svg>
<span class="t" style="left:1121.9px;top:394.7px;font-size:25.2px;color:#000;transform:scaleX(0.9757);">EditorCustomCSS</span>
<svg class="b" style="left:1572.5px;top:393px;" width="24" height="27" viewBox="0 0 24 27"><path d="M3.4 0 H24 L21.3 21.3 L11.2 26.8 L0 22.6 L1.1 17 H5.3 L4.9 19.3 L11.6 21.9 L17.6 19.3 L18.4 14 H1.8 L2.6 9.8 H19 L19.5 5.2 H2.6 Z" fill="#000"/></svg>
<span class="t" style="left:1611.9px;top:394.7px;font-size:25.2px;color:#000;transform:scaleX(0.9613);">.custom1{color : blue } .custom2{ color: green } .custom3{ color: red } .link1{ color: yell...</span>
<svg class="b" style="left:2712px;top:391.5px;" width="27" height="30" viewBox="0 0 27 30"><g class="i" stroke-width="2" stroke="#000"><rect x="1.2" y="4.6" width="24.6" height="24" rx="2.6"/><path d="M1.2 10 H25.8"/><path d="M7.6 1 V4.6 M19.4 1 V4.6"/><path d="M8 19.6 L11.8 23.4 L19.4 15.8"/></g></svg>
<svg class="b" style="left:2749px;top:392.5px;" width="26" height="30" viewBox="0 0 26 30"><g class="i" stroke-width="2.0" stroke="#000"><path d="M1.2 5.2 H24.8"/><path d="M8.2 5 L9.6 1.8 Q10 1.2 10.8 1.2 H15.2 Q16 1.2 16.4 1.8 L17.8 5"/><path d="M3.4 5.4 V25.8 Q3.4 28.6 6.2 28.6 H19.8 Q22.6 28.6 22.6 25.8 V5.4"/><path d="M8.6 10 V23.8 M13 10 V23.8 M17.4 10 V23.8"/></g></svg>
<span class="t" style="left:1121.9px;top:442.7px;font-size:25.2px;color:#000;transform:scaleX(1.0316);">EditorOptions</span>
<svg class="b" style="left:1572px;top:443px;" width="31.6" height="24.4" viewBox="0 0 32 26"><g fill="#000"><rect x="10.6" y="0" width="10.8" height="8.6" rx="1.6"/><rect x="0" y="17.4" width="9" height="8.6" rx="1.6"/><rect x="11.5" y="17.4" width="9" height="8.6" rx="1.6"/><rect x="23" y="17.4" width="9" height="8.6" rx="1.6"/></g><path d="M16 8 V18 M4.5 18 V13 H27.5 V18" fill="none" stroke="#000" stroke-width="2.4"/></svg>
<span class="t" style="left:1612.9px;top:442.7px;font-size:25.2px;color:#000;transform:scaleX(0.9696);">{"inlineClasses":{"custom3":"Custom 3","custom1":"Custom 1","custom2":"Custom 2"},...</span>
<svg class="b" style="left:2712px;top:439.5px;" width="27" height="30" viewBox="0 0 27 30"><g class="i" stroke-width="2" stroke="#000"><rect x="1.2" y="4.6" width="24.6" height="24" rx="2.6"/><path d="M1.2 10 H25.8"/><path d="M7.6 1 V4.6 M19.4 1 V4.6"/><path d="M8 19.6 L11.8 23.4 L19.4 15.8"/></g></svg>
<svg class="b" style="left:2749px;top:440.5px;" width="26" height="30" viewBox="0 0 26 30"><g class="i" stroke-width="2.0" stroke="#000"><path d="M1.2 5.2 H24.8"/><path d="M8.2 5 L9.6 1.8 Q10 1.2 10.8 1.2 H15.2 Q16 1.2 16.4 1.8 L17.8 5"/><path d="M3.4 5.4 V25.8 Q3.4 28.6 6.2 28.6 H19.8 Q22.6 28.6 22.6 25.8 V5.4"/><path d="M8.6 10 V23.8 M13 10 V23.8 M17.4 10 V23.8"/></g></svg>
<span class="t" style="left:1121.9px;top:490.7px;font-size:25.2px;color:#000;transform:scaleX(1.0052);">FunctionToolbar_LeftContent</span>
<svg class="b" style="left:1572px;top:491px;" width="31.6" height="24.4" viewBox="0 0 32 26"><g fill="#000"><rect x="10.6" y="0" width="10.8" height="8.6" rx="1.6"/><rect x="0" y="17.4" width="9" height="8.6" rx="1.6"/><rect x="11.5" y="17.4" width="9" height="8.6" rx="1.6"/><rect x="23" y="17.4" width="9" height="8.6" rx="1.6"/></g><path d="M16 8 V18 M4.5 18 V13 H27.5 V18" fill="none" stroke="#000" stroke-width="2.4"/></svg>
<span class="t" style="left:1612.9px;top:490.7px;font-size:25.2px;color:#000;transform:scaleX(1.0220);">[]</span>
<svg class="b" style="left:2712px;top:487.5px;" width="27" height="30" viewBox="0 0 27 30"><g class="i" stroke-width="2" stroke="#000"><rect x="1.2" y="4.6" width="24.6" height="24" rx="2.6"/><path d="M1.2 10 H25.8"/><path d="M7.6 1 V4.6 M19.4 1 V4.6"/><path d="M8 19.6 L11.8 23.4 L19.4 15.8"/></g></svg>
<svg class="b" style="left:2749px;top:488.5px;" width="26" height="30" viewBox="0 0 26 30"><g class="i" stroke-width="2.0" stroke="#000"><path d="M1.2 5.2 H24.8"/><path d="M8.2 5 L9.6 1.8 Q10 1.2 10.8 1.2 H15.2 Q16 1.2 16.4 1.8 L17.8 5"/><path d="M3.4 5.4 V25.8 Q3.4 28.6 6.2 28.6 H19.8 Q22.6 28.6 22.6 25.8 V5.4"/><path d="M8.6 10 V23.8 M13 10 V23.8 M17.4 10 V23.8"/></g></svg>
<span class="t" style="left:1121.9px;top:538.7px;font-size:25.2px;color:#000;transform:scaleX(1.0014);">FunctionToolbar_RightContent</span>
<svg class="b" style="left:1572px;top:539px;" width="31.6" height="24.4" viewBox="0 0 32 26"><g fill="#000"><rect x="10.6" y="0" width="10.8" height="8.6" rx="1.6"/><rect x="0" y="17.4" width="9" height="8.6" rx="1.6"/><rect x="11.5" y="17.4" width="9" height="8.6" rx="1.6"/><rect x="23" y="17.4" width="9" height="8.6" rx="1.6"/></g><path d="M16 8 V18 M4.5 18 V13 H27.5 V18" fill="none" stroke="#000" stroke-width="2.4"/></svg>
<span class="t" style="left:1612.9px;top:538.7px;font-size:25.2px;color:#000;transform:scaleX(1.0220);">[]</span>
<svg class="b" style="left:2712px;top:535.5px;" width="27" height="30" viewBox="0 0 27 30"><g class="i" stroke-width="2" stroke="#000"><rect x="1.2" y="4.6" width="24.6" height="24" rx="2.6"/><path d="M1.2 10 H25.8"/><path d="M7.6 1 V4.6 M19.4 1 V4.6"/><path d="M8 19.6 L11.8 23.4 L19.4 15.8"/></g></svg>
<svg class="b" style="left:2749px;top:536.5px;" width="26" height="30" viewBox="0 0 26 30"><g class="i" stroke-width="2.0" stroke="#000"><path d="M1.2 5.2 H24.8"/><path d="M8.2 5 L9.6 1.8 Q10 1.2 10.8 1.2 H15.2 Q16 1.2 16.4 1.8 L17.8 5"/><path d="M3.4 5.4 V25.8 Q3.4 28.6 6.2 28.6 H19.8 Q22.6 28.6 22.6 25.8 V5.4"/><path d="M8.6 10 V23.8 M13 10 V23.8 M17.4 10 V23.8"/></g></svg>
<span class="t" style="left:1121.9px;top:586.7px;font-size:25.2px;color:#000;transform:scaleX(1.0035);">ModuleHeader_Content</span>
<svg class="b" style="left:1572px;top:587px;" width="31.6" height="24.4" viewBox="0 0 32 26"><g fill="#000"><rect x="10.6" y="0" width="10.8" height="8.6" rx="1.6"/><rect x="0" y="17.4" width="9" height="8.6" rx="1.6"/><rect x="11.5" y="17.4" width="9" height="8.6" rx="1.6"/><rect x="23" y="17.4" width="9" height="8.6" rx="1.6"/></g><path d="M16 8 V18 M4.5 18 V13 H27.5 V18" fill="none" stroke="#000" stroke-width="2.4"/></svg>
<span class="t" style="left:1612.9px;top:586.7px;font-size:25.2px;color:#000;transform:scaleX(1.0618);">["edit"]</span>
<svg class="b" style="left:2712px;top:583.5px;" width="27" height="30" viewBox="0 0 27 30"><g class="i" stroke-width="2" stroke="#000"><rect x="1.2" y="4.6" width="24.6" height="24" rx="2.6"/><path d="M1.2 10 H25.8"/><path d="M7.6 1 V4.6 M19.4 1 V4.6"/><path d="M8 19.6 L11.8 23.4 L19.4 15.8"/></g></svg>
<svg class="b" style="left:2749px;top:584.5px;" width="26" height="30" viewBox="0 0 26 30"><g class="i" stroke-width="2.0" stroke="#000"><path d="M1.2 5.2 H24.8"/><path d="M8.2 5 L9.6 1.8 Q10 1.2 10.8 1.2 H15.2 Q16 1.2 16.4 1.8 L17.8 5"/><path d="M3.4 5.4 V25.8 Q3.4 28.6 6.2 28.6 H19.8 Q22.6 28.6 22.6 25.8 V5.4"/><path d="M8.6 10 V23.8 M13 10 V23.8 M17.4 10 V23.8"/></g></svg>
<span class="t" style="left:1121.9px;top:634.7px;font-size:25.2px;color:#000;transform:scaleX(1.0080);">Module_Description</span>
<svg class="b" style="left:2712px;top:631.5px;" width="27" height="30" viewBox="0 0 27 30"><g class="i" stroke-width="2" stroke="#000"><rect x="1.2" y="4.6" width="24.6" height="24" rx="2.6"/><path d="M1.2 10 H25.8"/><path d="M7.6 1 V4.6 M19.4 1 V4.6"/><path d="M8 19.6 L11.8 23.4 L19.4 15.8"/></g></svg>
<svg class="b" style="left:2749px;top:632.5px;" width="26" height="30" viewBox="0 0 26 30"><g class="i" stroke-width="2.0" stroke="#000"><path d="M1.2 5.2 H24.8"/><path d="M8.2 5 L9.6 1.8 Q10 1.2 10.8 1.2 H15.2 Q16 1.2 16.4 1.8 L17.8 5"/><path d="M3.4 5.4 V25.8 Q3.4 28.6 6.2 28.6 H19.8 Q22.6 28.6 22.6 25.8 V5.4"/><path d="M8.6 10 V23.8 M13 10 V23.8 M17.4 10 V23.8"/></g></svg>
<span class="t" style="left:1121.9px;top:682.7px;font-size:25.2px;color:#000;transform:scaleX(0.9899);">Module_Header</span>
<svg class="b" style="left:1572px;top:683.3px;" width="22" height="22" viewBox="0 0 22 22"><rect width="22" height="22" rx="3" fill="#000"/><path d="M4.4 11.4 L9 16 L17.6 6.8" fill="none" stroke="#fff" stroke-width="3.3"/></svg>
<span class="t" style="left:1599.4px;top:682.7px;font-size:25.2px;color:#000;transform:scaleX(1.0642);">true</span>
<svg class="b" style="left:2712px;top:679.5px;" width="27" height="30" viewBox="0 0 27 30"><g class="i" stroke-width="2" stroke="#000"><rect x="1.2" y="4.6" width="24.6" height="24" rx="2.6"/><path d="M1.2 10 H25.8"/><path d="M7.6 1 V4.6 M19.4 1 V4.6"/><path d="M8 19.6 L11.8 23.4 L19.4 15.8"/></g></svg>
<svg class="b" style="left:2749px;top:680.5px;" width="26" height="30" viewBox="0 0 26 30"><g class="i" stroke-width="2.0" stroke="#000"><path d="M1.2 5.2 H24.8"/><path d="M8.2 5 L9.6 1.8 Q10 1.2 10.8 1.2 H15.2 Q16 1.2 16.4 1.8 L17.8 5"/><path d="M3.4 5.4 V25.8 Q3.4 28.6 6.2 28.6 H19.8 Q22.6 28.6 22.6 25.8 V5.4"/><path d="M8.6 10 V23.8 M13 10 V23.8 M17.4 10 V23.8"/></g></svg>
<span class="t" style="left:1121.9px;top:730.7px;font-size:25.2px;color:#000;transform:scaleX(0.9876);">Module_Icon</span>
<svg class="b" style="left:1572px;top:730px;" width="25" height="25" viewBox="0 0 30 30"><g class="i" stroke-width="2.3" stroke="#000"><path d="M18.4 4.2 L22.4 1.4 Q23.6 .8 24.6 1.8 L28.4 7.6 Q29 8.8 28 9.8 L24.2 12.4"/><path d="M18.4 4.2 L24.2 12.4 L20.8 21.2 L1.4 28.6 L5.4 9.6 Z"/><path d="M1.6 28.4 L10.6 17.6"/><circle cx="12.2" cy="16" r="2.7"/></g></svg>
<span class="t" style="left:1601.4px;top:730.7px;font-size:25.2px;color:#000;transform:scaleX(1.0025);">x-fal fa-pen-nib</span>
<svg class="b" style="left:2712px;top:727.5px;" width="27" height="30" viewBox="0 0 27 30"><g class="i" stroke-width="2" stroke="#000"><rect x="1.2" y="4.6" width="24.6" height="24" rx="2.6"/><path d="M1.2 10 H25.8"/><path d="M7.6 1 V4.6 M19.4 1 V4.6"/><path d="M8 19.6 L11.8 23.4 L19.4 15.8"/></g></svg>
<svg class="b" style="left:2749px;top:728.5px;" width="26" height="30" viewBox="0 0 26 30"><g class="i" stroke-width="2.0" stroke="#000"><path d="M1.2 5.2 H24.8"/><path d="M8.2 5 L9.6 1.8 Q10 1.2 10.8 1.2 H15.2 Q16 1.2 16.4 1.8 L17.8 5"/><path d="M3.4 5.4 V25.8 Q3.4 28.6 6.2 28.6 H19.8 Q22.6 28.6 22.6 25.8 V5.4"/><path d="M8.6 10 V23.8 M13 10 V23.8 M17.4 10 V23.8"/></g></svg>
<span class="t" style="left:1121.9px;top:778.7px;font-size:25.2px;color:#000;transform:scaleX(0.9818);">Module_Name</span>
<span class="t" style="left:1570.9px;top:778.7px;font-size:25.2px;color:#000;transform:scaleX(1.0220);">HTML Content</span>
<svg class="b" style="left:2712px;top:775.5px;" width="27" height="30" viewBox="0 0 27 30"><g class="i" stroke-width="2" stroke="#000"><rect x="1.2" y="4.6" width="24.6" height="24" rx="2.6"/><path d="M1.2 10 H25.8"/><path d="M7.6 1 V4.6 M19.4 1 V4.6"/><path d="M8 19.6 L11.8 23.4 L19.4 15.8"/></g></svg>
<svg class="b" style="left:2749px;top:776.5px;" width="26" height="30" viewBox="0 0 26 30"><g class="i" stroke-width="2.0" stroke="#000"><path d="M1.2 5.2 H24.8"/><path d="M8.2 5 L9.6 1.8 Q10 1.2 10.8 1.2 H15.2 Q16 1.2 16.4 1.8 L17.8 5"/><path d="M3.4 5.4 V25.8 Q3.4 28.6 6.2 28.6 H19.8 Q22.6 28.6 22.6 25.8 V5.4"/><path d="M8.6 10 V23.8 M13 10 V23.8 M17.4 10 V23.8"/></g></svg>
<span class="t" style="left:1121.9px;top:826.7px;font-size:25.2px;color:#000;transform:scaleX(0.9978);">SanitizeHTML</span>
<svg class="b" style="left:1572px;top:827.3px;" width="22" height="22" viewBox="0 0 22 22"><rect width="22" height="22" rx="3" fill="#000"/><path d="M4.4 11.4 L9 16 L17.6 6.8" fill="none" stroke="#fff" stroke-width="3.3"/></svg>
<span class="t" style="left:1599.4px;top:826.7px;font-size:25.2px;color:#000;transform:scaleX(1.0642);">true</span>
<svg class="b" style="left:2712px;top:823.5px;" width="27" height="30" viewBox="0 0 27 30"><g class="i" stroke-width="2" stroke="#000"><rect x="1.2" y="4.6" width="24.6" height="24" rx="2.6"/><path d="M1.2 10 H25.8"/><path d="M7.6 1 V4.6 M19.4 1 V4.6"/><path d="M8 19.6 L11.8 23.4 L19.4 15.8"/></g></svg>
<svg class="b" style="left:2749px;top:824.5px;" width="26" height="30" viewBox="0 0 26 30"><g class="i" stroke-width="2.0" stroke="#000"><path d="M1.2 5.2 H24.8"/><path d="M8.2 5 L9.6 1.8 Q10 1.2 10.8 1.2 H15.2 Q16 1.2 16.4 1.8 L17.8 5"/><path d="M3.4 5.4 V25.8 Q3.4 28.6 6.2 28.6 H19.8 Q22.6 28.6 22.6 25.8 V5.4"/><path d="M8.6 10 V23.8 M13 10 V23.8 M17.4 10 V23.8"/></g></svg>
<div class="b" style="left:1119px;top:1266px;width:216px;height:56px;background:linear-gradient(to bottom,#fff 40%,#f3f3f3);border:1px solid #c2c2c2"></div>
<span class="t" style="left:1133.9px;top:1282.7px;font-size:25.2px;color:#6a6a6a;transform:scaleX(1.0627);">Filter</span>
<svg class="b" style="left:1295px;top:1283.5px;" width="20" height="20" viewBox="0 0 20 20"><path class="i" stroke-width="2.6" stroke-linecap="butt" d="M2 2 L18 18 M18 2 L2 18"/ stroke="#000"></svg>
<div class="b" style="left:1346.8px;top:1280.5px;width:25.5px;height:25.5px;border:2.2px solid #000;border-radius:5.5px;background:#fff"></div>
<span class="t" style="left:1384.9px;top:1282.7px;font-size:25.2px;color:#000;transform:scaleX(1.0114);">Gruppieren</span>
<div class="b" style="left:1524px;top:1282px;width:1px;height:26px;background:#cfcfcf"></div>
<div class="b" style="left:1534px;top:1279px;width:10px;height:30px;background:#41ad49"></div>
<div class="b" style="left:1553px;top:1280.5px;width:25.5px;height:25.5px;border:2.2px solid #000;border-radius:5.5px;background:#fff"></div>
<span class="t" style="left:1591.9px;top:1282.7px;font-size:25.2px;color:#000;transform:scaleX(1.0267);">Nicht Default</span>
<div class="b" style="left:1752px;top:1282px;width:1px;height:26px;background:#cfcfcf"></div>
<div class="b" style="left:1762px;top:1279px;width:10px;height:30px;background:#e2884f"></div>
<div class="b" style="left:1782px;top:1280.5px;width:25.5px;height:25.5px;border:2.2px solid #000;border-radius:5.5px;background:#fff"></div>
<span class="t" style="left:1820.5px;top:1282.7px;font-size:25.2px;color:#000;transform:scaleX(0.9759);">Readonly</span>
<div class="b" style="left:1936px;top:1282px;width:1px;height:26px;background:#cfcfcf"></div>
<div class="b" style="left:1946px;top:1279px;width:10px;height:30px;background:#e6484f"></div>
<div class="b" style="left:1966px;top:1280.5px;width:25.5px;height:25.5px;border:2.2px solid #000;border-radius:5.5px;background:#fff"></div>
<span class="t" style="left:2003.9px;top:1282.7px;font-size:25.2px;color:#000;transform:scaleX(1.0133);">Unbekannt</span>
<div class="b" style="left:2350px;top:1265px;width:231px;height:57px;background:#fff;border:1.5px solid #dd7f4b"></div>
<svg class="b" style="left:2363px;top:1278px;" width="30" height="30" viewBox="0 0 30 30"><g class="i" stroke="#cf6a39" stroke-width="2"><path d="M4.6 9.4 A12.4 12.4 0 1 1 3.2 19.6"/><path d="M3.4 2.2 V10 H11.2"/></g></svg>
<span class="t" style="left:2406.3px;top:1281.7px;font-size:25.2px;color:#cf6a39;transform:scaleX(1.0016);">Zurücksetzen</span>
<div class="b" style="left:2593px;top:1265px;width:189px;height:57px;background:#dd7f4b"></div>
<svg class="b" style="left:2607.5px;top:1281px;" width="26" height="26" viewBox="0 0 26 26"><g class="i" stroke="#fff" stroke-width="2"><path d="M1.2 3.6 Q1.2 1.2 3.6 1.2 H18.6 L24.8 7.4 V22.4 Q24.8 24.8 22.4 24.8 H3.6 Q1.2 24.8 1.2 22.4 Z"/><path d="M6.4 1.4 V8.4 H17.6 V1.4"/><circle cx="13" cy="16.4" r="3.4"/></g></svg>
<span class="t" style="left:2649.4px;top:1281.7px;font-size:25.2px;color:#fff;transform:scaleX(0.9651);">Speichern</span>
<svg class="b" style="left:0px;top:1322px;z-index:60" width="9" height="20" viewBox="0 0 9 20"><path d="M0 0 C0.6 10 2.5 16.5 8.5 20 H0 Z" fill="#000"/></svg>
<svg class="b" style="left:2871px;top:1334px;z-index:60" width="7" height="8" viewBox="0 0 7 8"><path d="M7 0 V8 H0 A9 10 0 0 0 7 0Z" fill="#000"/></svg>
</body></html>
